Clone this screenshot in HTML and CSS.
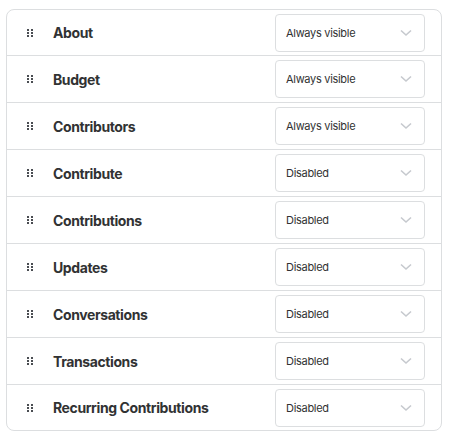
FILE: index.html
```html
<!DOCTYPE html>
<html>
<head>
<meta charset="utf-8">
<link rel="stylesheet" href="styles.css">
</head>
<body>
<div class="list">
  <div class="row"><span class="handle"><svg width="6" height="8" viewBox="0 0 6 8"><g fill="#4a4d52"><rect x="0" y="0" width="2" height="2"/><rect x="4" y="0" width="2" height="2"/><rect x="0" y="3" width="2" height="2"/><rect x="4" y="3" width="2" height="2"/><rect x="0" y="6" width="2" height="2"/><rect x="4" y="6" width="2" height="2"/></g></svg></span><span class="label">About</span><div class="select"><span>Always visible</span><svg class="chev" width="12" height="8" viewBox="0 0 12 8"><path d="M1 1.5 L6 6 L11 1.5" fill="none" stroke="#c6c9ce" stroke-width="1.6"/></svg></div></div>
  <div class="row"><span class="handle"><svg width="6" height="8" viewBox="0 0 6 8"><g fill="#4a4d52"><rect x="0" y="0" width="2" height="2"/><rect x="4" y="0" width="2" height="2"/><rect x="0" y="3" width="2" height="2"/><rect x="4" y="3" width="2" height="2"/><rect x="0" y="6" width="2" height="2"/><rect x="4" y="6" width="2" height="2"/></g></svg></span><span class="label">Budget</span><div class="select"><span>Always visible</span><svg class="chev" width="12" height="8" viewBox="0 0 12 8"><path d="M1 1.5 L6 6 L11 1.5" fill="none" stroke="#c6c9ce" stroke-width="1.6"/></svg></div></div>
  <div class="row"><span class="handle"><svg width="6" height="8" viewBox="0 0 6 8"><g fill="#4a4d52"><rect x="0" y="0" width="2" height="2"/><rect x="4" y="0" width="2" height="2"/><rect x="0" y="3" width="2" height="2"/><rect x="4" y="3" width="2" height="2"/><rect x="0" y="6" width="2" height="2"/><rect x="4" y="6" width="2" height="2"/></g></svg></span><span class="label">Contributors</span><div class="select"><span>Always visible</span><svg class="chev" width="12" height="8" viewBox="0 0 12 8"><path d="M1 1.5 L6 6 L11 1.5" fill="none" stroke="#c6c9ce" stroke-width="1.6"/></svg></div></div>
  <div class="row"><span class="handle"><svg width="6" height="8" viewBox="0 0 6 8"><g fill="#4a4d52"><rect x="0" y="0" width="2" height="2"/><rect x="4" y="0" width="2" height="2"/><rect x="0" y="3" width="2" height="2"/><rect x="4" y="3" width="2" height="2"/><rect x="0" y="6" width="2" height="2"/><rect x="4" y="6" width="2" height="2"/></g></svg></span><span class="label">Contribute</span><div class="select"><span>Disabled</span><svg class="chev" width="12" height="8" viewBox="0 0 12 8"><path d="M1 1.5 L6 6 L11 1.5" fill="none" stroke="#c6c9ce" stroke-width="1.6"/></svg></div></div>
  <div class="row"><span class="handle"><svg width="6" height="8" viewBox="0 0 6 8"><g fill="#4a4d52"><rect x="0" y="0" width="2" height="2"/><rect x="4" y="0" width="2" height="2"/><rect x="0" y="3" width="2" height="2"/><rect x="4" y="3" width="2" height="2"/><rect x="0" y="6" width="2" height="2"/><rect x="4" y="6" width="2" height="2"/></g></svg></span><span class="label">Contributions</span><div class="select"><span>Disabled</span><svg class="chev" width="12" height="8" viewBox="0 0 12 8"><path d="M1 1.5 L6 6 L11 1.5" fill="none" stroke="#c6c9ce" stroke-width="1.6"/></svg></div></div>
  <div class="row"><span class="handle"><svg width="6" height="8" viewBox="0 0 6 8"><g fill="#4a4d52"><rect x="0" y="0" width="2" height="2"/><rect x="4" y="0" width="2" height="2"/><rect x="0" y="3" width="2" height="2"/><rect x="4" y="3" width="2" height="2"/><rect x="0" y="6" width="2" height="2"/><rect x="4" y="6" width="2" height="2"/></g></svg></span><span class="label">Updates</span><div class="select"><span>Disabled</span><svg class="chev" width="12" height="8" viewBox="0 0 12 8"><path d="M1 1.5 L6 6 L11 1.5" fill="none" stroke="#c6c9ce" stroke-width="1.6"/></svg></div></div>
  <div class="row"><span class="handle"><svg width="6" height="8" viewBox="0 0 6 8"><g fill="#4a4d52"><rect x="0" y="0" width="2" height="2"/><rect x="4" y="0" width="2" height="2"/><rect x="0" y="3" width="2" height="2"/><rect x="4" y="3" width="2" height="2"/><rect x="0" y="6" width="2" height="2"/><rect x="4" y="6" width="2" height="2"/></g></svg></span><span class="label">Conversations</span><div class="select"><span>Disabled</span><svg class="chev" width="12" height="8" viewBox="0 0 12 8"><path d="M1 1.5 L6 6 L11 1.5" fill="none" stroke="#c6c9ce" stroke-width="1.6"/></svg></div></div>
  <div class="row"><span class="handle"><svg width="6" height="8" viewBox="0 0 6 8"><g fill="#4a4d52"><rect x="0" y="0" width="2" height="2"/><rect x="4" y="0" width="2" height="2"/><rect x="0" y="3" width="2" height="2"/><rect x="4" y="3" width="2" height="2"/><rect x="0" y="6" width="2" height="2"/><rect x="4" y="6" width="2" height="2"/></g></svg></span><span class="label">Transactions</span><div class="select"><span>Disabled</span><svg class="chev" width="12" height="8" viewBox="0 0 12 8"><path d="M1 1.5 L6 6 L11 1.5" fill="none" stroke="#c6c9ce" stroke-width="1.6"/></svg></div></div>
  <div class="row"><span class="handle"><svg width="6" height="8" viewBox="0 0 6 8"><g fill="#4a4d52"><rect x="0" y="0" width="2" height="2"/><rect x="4" y="0" width="2" height="2"/><rect x="0" y="3" width="2" height="2"/><rect x="4" y="3" width="2" height="2"/><rect x="0" y="6" width="2" height="2"/><rect x="4" y="6" width="2" height="2"/></g></svg></span><span class="label">Recurring Contributions</span><div class="select"><span>Disabled</span><svg class="chev" width="12" height="8" viewBox="0 0 12 8"><path d="M1 1.5 L6 6 L11 1.5" fill="none" stroke="#c6c9ce" stroke-width="1.6"/></svg></div></div>
</div>
</body>
</html>
```

FILE: styles.css
```css
* { box-sizing: border-box; }
body {
  margin: 0;
  padding: 9px 0 0 6px;
  background: #fff;
  font-family: Inter, "Noto Sans", sans-serif;
}
.list {
  width: 436px;
  border: 1px solid #dcdee0;
  border-radius: 8px;
}
.row {
  display: flex;
  align-items: center;
  height: 47px;
  padding: 0 16px 0 20px;
  border-bottom: 1px solid #dcdee0;
}
.row:first-child {
  height: 46px;
}
.row:last-child {
  border-bottom: none;
  height: 45px;
}
.handle {
  display: flex;
  width: 26px;
}
.handle svg { display: block; }
.label {
  flex: 1;
  font-size: 14px;
  font-weight: 700;
  color: #313233;
  letter-spacing: -0.4px;
}
.select {
  width: 150px;
  height: 38px;
  border: 1px solid #dcdee0;
  border-radius: 4px;
  display: flex;
  align-items: center;
  justify-content: space-between;
  padding: 0 12px 0 10px;
  font-size: 11px;
  letter-spacing: -0.3px;
  color: #313233;
}
.chev { display: block; }
```
